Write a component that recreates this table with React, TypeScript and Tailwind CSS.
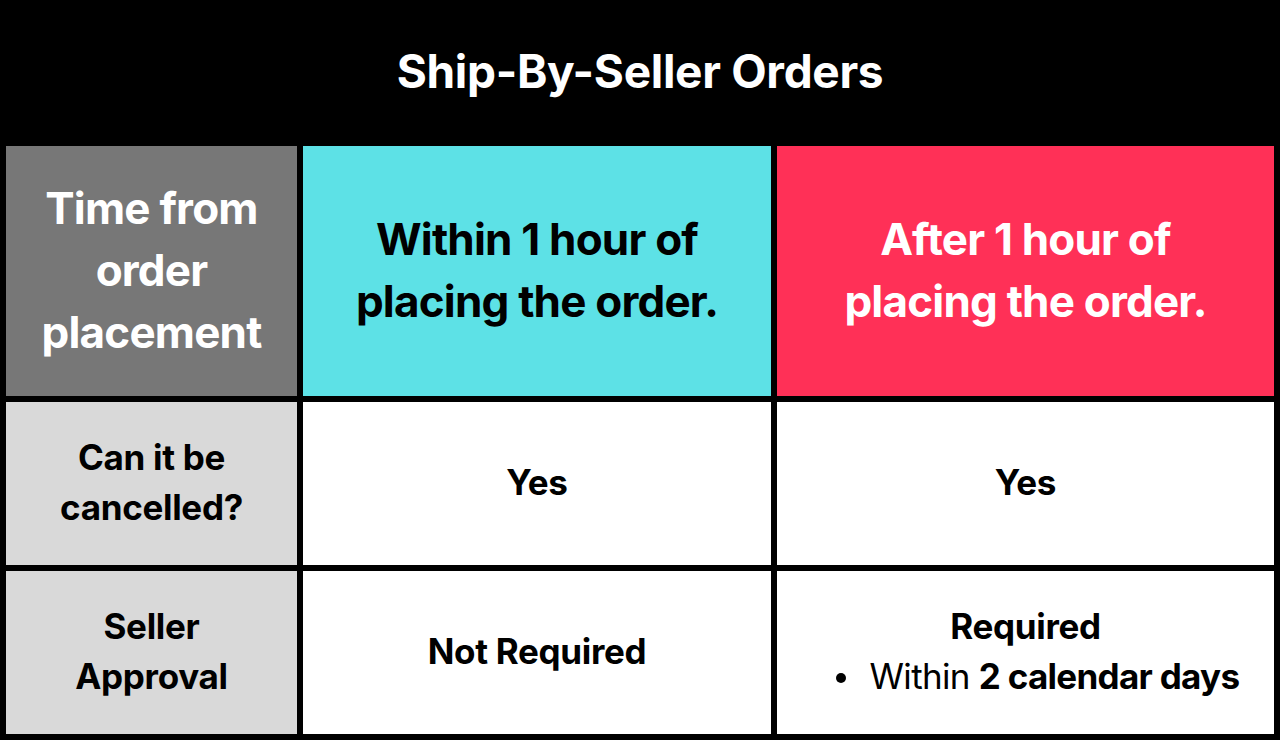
import React from "react";

export default function App() {
  const font = { fontFamily: "Inter, 'Noto Sans', sans-serif" };
  return (
    <div
      className="w-[1280px] h-[740px] bg-black flex flex-col overflow-hidden"
      style={font}
    >
      <div className="h-[146px] flex items-center justify-center pb-[4px]">
        <h1 className="text-white font-bold text-[46px] leading-none tracking-[-0.3px]">
          Ship-By-Seller Orders
        </h1>
      </div>
      <div className="grid grid-cols-[291px_468px_497px] grid-rows-[250px_163px_163px] gap-[6px] px-[6px]">
        <div className="bg-[#777777] flex items-center justify-center text-center text-white font-bold text-[44px] leading-[62px] tracking-[-0.8px] px-2 pb-[2px]">
          Time from
          <br />
          order
          <br />
          placement
        </div>
        <div className="bg-[#5de1e6] flex items-center justify-center text-center text-black font-bold text-[44px] leading-[62px] tracking-[-0.8px] pb-[2px]">
          Within 1 hour of
          <br />
          placing the order.
        </div>
        <div className="bg-[#ff3057] flex items-center justify-center text-center text-white font-bold text-[44px] leading-[62px] tracking-[-0.8px] pb-[2px]">
          After 1 hour of
          <br />
          placing the order.
        </div>

        <div className="bg-[#d9d9d9] flex items-center justify-center text-center text-black font-bold text-[35px] leading-[50px] tracking-[-0.3px] pb-[3px]">
          Can it be
          <br />
          cancelled?
        </div>
        <div className="bg-white flex items-center justify-center text-black font-bold text-[35px] tracking-[-0.3px] pb-[3px]">
          Yes
        </div>
        <div className="bg-white flex items-center justify-center text-black font-bold text-[35px] tracking-[-0.3px] pb-[3px]">
          Yes
        </div>

        <div className="bg-[#d9d9d9] flex items-center justify-center text-center text-black font-bold text-[35px] leading-[50px] tracking-[-0.3px] pb-[3px]">
          Seller
          <br />
          Approval
        </div>
        <div className="bg-white flex items-center justify-center text-black font-bold text-[35px] tracking-[-0.3px] pb-[3px]">
          Not Required
        </div>
        <div className="bg-white flex flex-col items-center justify-center text-black text-[35px] leading-[50px] tracking-[-0.3px] pb-[3px]">
          <div className="font-bold">Required</div>
          <div className="flex items-center pl-[24px] tracking-[-0.7px]">
            <span className="w-[10px] h-[10px] rounded-full bg-black mr-[24px] mt-[4px]" />
            <span>
              Within <span className="font-bold">2 calendar days</span>
            </span>
          </div>
        </div>
      </div>
    </div>
  );
}
